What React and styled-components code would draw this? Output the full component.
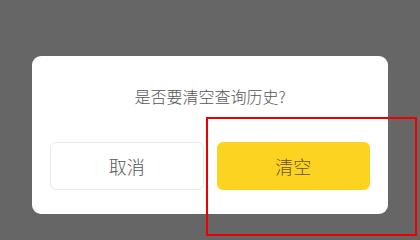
import React from 'react';
import styled, { createGlobalStyle } from 'styled-components';

const GlobalStyle = createGlobalStyle`
    html, body {
        margin: 0;
        padding: 0;
        background: #666666;
    }
    body {
        font-family: "Noto Sans CJK SC", "Noto Sans", sans-serif;
    }
`;

const Overlay = styled.div`
    position: relative;
    width: 420px;
    height: 237px;
    background: #666666;
    display: flex;
    flex-direction: column;
    align-items: center;
    padding-top: 56px;
    box-sizing: border-box;
    overflow: hidden;
`;

const Dialog = styled.div`
    width: 356px;
    height: 158px;
    box-sizing: border-box;
    background: #ffffff;
    border-radius: 9px;
    padding: 28px 18px 24px 18px;
    display: flex;
    flex-direction: column;
`;

const Message = styled.div`
    font-size: 16px;
    line-height: 24px;
    font-weight: 300;
    color: #555555;
    text-align: center;
`;

const ButtonRow = styled.div`
    display: flex;
    gap: 13px;
    margin-top: auto;
`;

const Button = styled.div`
    flex: 1;
    height: 48px;
    box-sizing: border-box;
    border-radius: 6px;
    display: flex;
    align-items: center;
    justify-content: center;
    font-size: 18px;
    font-weight: 300;
    background: ${props => props.$primary ? '#fdd322' : '#ffffff'};
    color: ${props => props.$primary ? '#6b5518' : '#555555'};
    border: 1px solid ${props => props.$primary ? '#fdd322' : '#e9e9e9'};
`;

const Highlight = styled.div`
    position: absolute;
    left: 206px;
    top: 117px;
    width: 211px;
    height: 119px;
    box-sizing: border-box;
    border: 2px solid #ee0000;
    pointer-events: none;
`;

const App = () => {
    return (
        <>
            <GlobalStyle />
            <Overlay>
                <Dialog>
                    <Message>是否要清空查询历史?</Message>
                    <ButtonRow>
                        <Button>取消</Button>
                        <Button $primary>清空</Button>
                    </ButtonRow>
                </Dialog>
                <Highlight />
            </Overlay>
        </>
    );
};

export default App;
